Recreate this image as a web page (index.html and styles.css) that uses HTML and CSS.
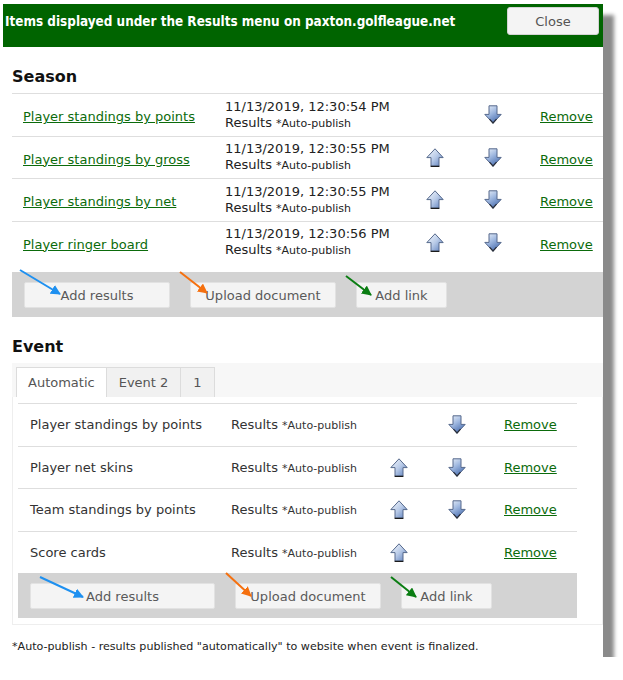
FILE: index.html
```html
<!DOCTYPE html>
<html lang="en">
<head>
  <meta charset="UTF-8">
  <title>Results menu items</title>
  <link rel="stylesheet" href="styles.css">
</head>
<body>

  <svg class="defs" aria-hidden="true">
    <defs>
      <linearGradient id="gUp" x1="0" y1="0" x2="1" y2="1">
        <stop offset="0" stop-color="#f6f9fd"/>
        <stop offset="0.5" stop-color="#b9cbe8"/>
        <stop offset="1" stop-color="#5478b8"/>
      </linearGradient>
      <linearGradient id="gDown" x1="0" y1="0" x2="0.6" y2="1">
        <stop offset="0" stop-color="#eef3fa"/>
        <stop offset="0.5" stop-color="#9fb8e0"/>
        <stop offset="1" stop-color="#4c70b0"/>
      </linearGradient>
      <symbol id="up" viewBox="0 0 18 19">
        <path d="M9 .8 17.2 9.6H13V18.2H5V9.6H.8Z" fill="url(#gUp)" stroke="#56698c" stroke-width="1" stroke-linejoin="round"/>
        <path d="M4.6 18.4h8.8" stroke="#1b1b1b" stroke-width="1.3"/>
      </symbol>
      <symbol id="down" viewBox="0 0 18 19">
        <path d="M5 .8H13V9.4H17.2L9 18.2.8 9.4H5Z" fill="url(#gDown)" stroke="#56698c" stroke-width="1" stroke-linejoin="round"/>
        <path d="M5.5 14.2 9 18l3.5-3.8" fill="none" stroke="#2a2f3a" stroke-width="1.2"/>
      </symbol>
      <marker id="hBlue" viewBox="0 0 10 10" refX="9" refY="5" markerWidth="5" markerHeight="5" orient="auto">
        <path d="M0 0 10 5 0 10Z" fill="#1e90f0"/>
      </marker>
      <marker id="hOrange" viewBox="0 0 10 10" refX="9" refY="5" markerWidth="5" markerHeight="5" orient="auto">
        <path d="M0 0 10 5 0 10Z" fill="#f5700f"/>
      </marker>
      <marker id="hGreen" viewBox="0 0 10 10" refX="9" refY="5" markerWidth="5" markerHeight="5" orient="auto">
        <path d="M0 0 10 5 0 10Z" fill="#0a7d12"/>
      </marker>
    </defs>
  </svg>

  <div class="dialog">
    <div class="titlebar">
      <span class="title">Items displayed under the Results menu on paxton.golfleague.net</span>
      <button class="close">Close</button>
    </div>

    <div class="content">
      <h2>Season</h2>

      <div class="list season">
        <div class="row">
          <div class="name"><a href="#">Player standings by points</a></div>
          <div class="when">11/13/2019, 12:30:54 PM<br>Results <small>*Auto-publish</small></div>
          <div></div>
          <div><svg class="arrow"><use href="#down"/></svg></div>
          <div class="remove"><a href="#">Remove</a></div>
        </div>
        <div class="row">
          <div class="name"><a href="#">Player standings by gross</a></div>
          <div class="when">11/13/2019, 12:30:55 PM<br>Results <small>*Auto-publish</small></div>
          <div><svg class="arrow"><use href="#up"/></svg></div>
          <div><svg class="arrow"><use href="#down"/></svg></div>
          <div class="remove"><a href="#">Remove</a></div>
        </div>
        <div class="row">
          <div class="name"><a href="#">Player standings by net</a></div>
          <div class="when">11/13/2019, 12:30:55 PM<br>Results <small>*Auto-publish</small></div>
          <div><svg class="arrow"><use href="#up"/></svg></div>
          <div><svg class="arrow"><use href="#down"/></svg></div>
          <div class="remove"><a href="#">Remove</a></div>
        </div>
        <div class="row">
          <div class="name"><a href="#">Player ringer board</a></div>
          <div class="when">11/13/2019, 12:30:56 PM<br>Results <small>*Auto-publish</small></div>
          <div><svg class="arrow"><use href="#up"/></svg></div>
          <div><svg class="arrow"><use href="#down"/></svg></div>
          <div class="remove"><a href="#">Remove</a></div>
        </div>
      </div>

      <div class="actions season-actions">
        <button class="btn btn-results">Add results</button>
        <button class="btn btn-upload">Upload document</button>
        <button class="btn btn-link">Add link</button>
        <svg class="pointers">
          <line x1="8" y1="-2" x2="48" y2="22" stroke="#1e90f0" stroke-width="2" marker-end="url(#hBlue)"/>
          <line x1="168" y1="0" x2="195" y2="21" stroke="#f5700f" stroke-width="2" marker-end="url(#hOrange)"/>
          <line x1="334" y1="4" x2="359" y2="23" stroke="#0a7d12" stroke-width="2" marker-end="url(#hGreen)"/>
        </svg>
      </div>

      <h2>Event</h2>

      <div class="tabs">
        <span class="tab active">Automatic</span>
        <span class="tab">Event 2</span>
        <span class="tab">1</span>
      </div>

      <div class="panel">
        <div class="list event">
          <div class="row">
            <div class="name">Player standings by points</div>
            <div>Results <small>*Auto-publish</small></div>
            <div></div>
            <div><svg class="arrow"><use href="#down"/></svg></div>
            <div><a href="#">Remove</a></div>
          </div>
          <div class="row">
            <div class="name">Player net skins</div>
            <div>Results <small>*Auto-publish</small></div>
            <div><svg class="arrow"><use href="#up"/></svg></div>
            <div><svg class="arrow"><use href="#down"/></svg></div>
            <div><a href="#">Remove</a></div>
          </div>
          <div class="row">
            <div class="name">Team standings by points</div>
            <div>Results <small>*Auto-publish</small></div>
            <div><svg class="arrow"><use href="#up"/></svg></div>
            <div><svg class="arrow"><use href="#down"/></svg></div>
            <div><a href="#">Remove</a></div>
          </div>
          <div class="row">
            <div class="name">Score cards</div>
            <div>Results <small>*Auto-publish</small></div>
            <div><svg class="arrow"><use href="#up"/></svg></div>
            <div></div>
            <div><a href="#">Remove</a></div>
          </div>
        </div>

        <div class="actions">
          <button class="btn btn-results wide">Add results</button>
          <button class="btn btn-upload">Upload document</button>
          <button class="btn btn-link">Add link</button>
          <svg class="pointers">
            <line x1="22" y1="4" x2="65" y2="24" stroke="#1e90f0" stroke-width="2" marker-end="url(#hBlue)"/>
            <line x1="208" y1="0" x2="233" y2="23" stroke="#f5700f" stroke-width="2" marker-end="url(#hOrange)"/>
            <line x1="373" y1="4" x2="398" y2="24" stroke="#0a7d12" stroke-width="2" marker-end="url(#hGreen)"/>
          </svg>
        </div>
      </div>

      <p class="note">*Auto-publish - results published "automatically" to website when event is finalized.</p>
    </div>
  </div>

</body>
</html>
```

FILE: styles.css
```css
* {
  box-sizing: border-box;
}

body {
  margin: 0;
  background: #fff;
  font-family: "DejaVu Sans", Verdana, sans-serif;
  font-size: 13px;
  color: #222;
}

.defs {
  position: absolute;
  width: 0;
  height: 0;
}

.dialog {
  width: 600px;
  height: 653px;
  margin: 4px 0 0 3px;
  background: #fff;
  box-shadow: 11px 11px 4px #8a8a8a;
}

.titlebar {
  height: 43px;
  background: #006400;
  display: flex;
  align-items: flex-start;
  justify-content: space-between;
  padding: 3px 4px 0 2px;
}

.title {
  color: #fff;
  font: bold 13.4px "DejaVu Sans Condensed", "DejaVu Sans", sans-serif;
  line-height: 30px;
}

.close {
  width: 92px;
  height: 28px;
  background: #f4f4f4;
  border: 1px solid #d4d4d4;
  border-radius: 3px;
  color: #555;
  font: 13px "DejaVu Sans", sans-serif;
}

.content {
  padding-left: 9px;
}

h2 {
  margin: 0;
  padding: 20px 0 6px;
  font-size: 16px;
  line-height: 20px;
  color: #111;
}

.row {
  display: grid;
  align-items: center;
  height: 42.5px;
  border-top: 1px solid #dedede;
}

.season .row {
  grid-template-columns: 213px 201px 58px 56px 1fr;
}

.event .row {
  grid-template-columns: 213px 159px 58px 56px 1fr;
  color: #333;
}

.season .name,
.season .remove {
  padding-top: 4px;
}

.season .name {
  padding-left: 11px;
}

.event .name {
  padding-left: 12px;
}

.when {
  line-height: 16px;
  padding-top: 1px;
}

small {
  font-size: 11px;
}

a {
  color: #0b6b0b;
}

.arrow {
  display: block;
  width: 18px;
  height: 19px;
}

.actions {
  position: relative;
  display: flex;
  gap: 20px;
  height: 45px;
  padding: 10px 12px 0;
  background: #d3d3d3;
}

.season-actions {
  margin-top: 9px;
}

.btn {
  height: 26px;
  background: #f4f4f4;
  border: 1px solid #e2e2e2;
  border-radius: 2px;
  color: #5a5a5a;
  font: 13px "DejaVu Sans", sans-serif;
  padding: 0;
}

.btn-results,
.btn-upload {
  width: 146px;
}

.btn-results.wide {
  width: 185px;
}

.btn-link {
  width: 91px;
}

.pointers {
  position: absolute;
  left: 0;
  top: 0;
  width: 100%;
  height: 100%;
  overflow: visible;
  pointer-events: none;
}

.tabs {
  display: flex;
  padding: 4px 0 0 4px;
  background: #f7f7f7;
}

.tab {
  height: 30px;
  line-height: 29px;
  padding: 0 12px;
  border: 1px solid #dcdcdc;
  border-bottom: none;
  background: #f1f1f1;
  color: #555;
}

.tab + .tab {
  border-left: none;
}

.tab.active {
  background: #fff;
  padding: 0 11px;
}

.panel {
  border: 1px solid #eee;
  border-top: none;
  padding: 6px 25px 6px 5px;
}

.note {
  margin: 0;
  padding-top: 15px;
  font: 11.1px "DejaVu Sans", sans-serif;
  line-height: 14px;
  color: #222;
}
```
